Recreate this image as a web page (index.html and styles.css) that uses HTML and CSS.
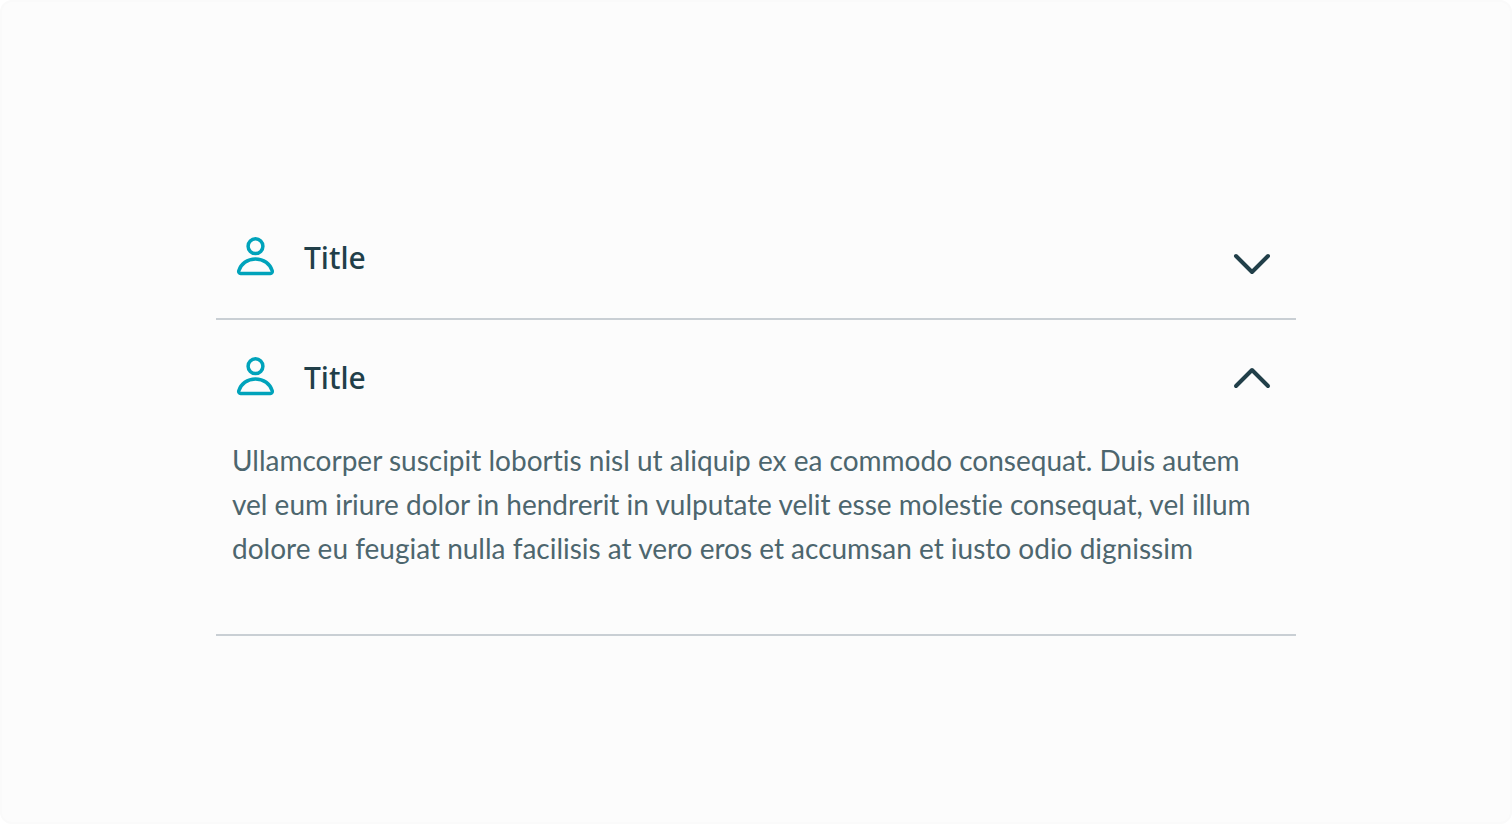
FILE: index.html
```html
<!DOCTYPE html>
<html lang="en">
<head>
  <meta charset="UTF-8">
  <meta name="viewport" content="width=device-width, initial-scale=1.0">
  <title>Accordion</title>
  <link rel="stylesheet" href="styles.css">
</head>
<body>
<main class="stage">
  <div class="accordion">
    <section class="item">
      <button class="item-header" type="button" aria-expanded="false">
        <svg class="icon user" viewBox="0 0 48 48" aria-hidden="true">
          <circle cx="23.5" cy="12.2" r="7.4"/>
          <path d="M8.6 39.4H38.4C39.8 39.4 40.6 38.2 40.2 36.8C38.2 29.8 31.6 24.9 23.5 24.9S8.8 29.8 6.8 36.8C6.4 38.2 7.2 39.4 8.6 39.4Z"/>
        </svg>
        <span class="title">Title</span>
        <svg class="icon chevron" viewBox="0 0 48 48" aria-hidden="true">
          <path d="M8 22L24 38L40 22"/>
        </svg>
      </button>
    </section>
    <section class="item">
      <button class="item-header" type="button" aria-expanded="true" aria-controls="panel">
        <svg class="icon user" viewBox="0 0 48 48" aria-hidden="true">
          <circle cx="23.5" cy="12.2" r="7.4"/>
          <path d="M8.6 39.4H38.4C39.8 39.4 40.6 38.2 40.2 36.8C38.2 29.8 31.6 24.9 23.5 24.9S8.8 29.8 6.8 36.8C6.4 38.2 7.2 39.4 8.6 39.4Z"/>
        </svg>
        <span class="title">Title</span>
        <svg class="icon chevron" viewBox="0 0 48 48" aria-hidden="true">
          <path d="M8 32L24 16L40 32"/>
        </svg>
      </button>
      <div class="panel" id="panel">
        <p>Ullamcorper suscipit lobortis nisl ut aliquip ex ea commodo consequat. Duis autem vel eum iriure dolor in hendrerit in vulputate velit esse molestie consequat, vel illum dolore eu feugiat nulla facilisis at vero eros et accumsan et iusto odio dignissim</p>
      </div>
    </section>
  </div>
</main>
</body>
</html>
```
FILE: styles.css
```css
* {
  box-sizing: border-box;
}
body {
  margin: 0;
  background-color: #fff;
  color: #213f49;
  font-family: "Noto Sans", sans-serif;
}
.stage {
  display: flex;
  justify-content: center;
  align-items: center;
  min-height: 100vh;
  border: 2px solid #fafafa;
  border-radius: 12px;
  background-color: #fcfcfc;
}
.accordion {
  width: 100%;
  max-width: 1080px;
  padding-top: 12px;
}
.item {
  border-bottom: 2px solid #c9cfd4;
}
.item-header {
  display: flex;
  align-items: center;
  gap: 24px;
  width: 100%;
  height: 118px;
  padding: 0 20px 2px 16px;
  border: none;
  background: none;
  color: inherit;
  font: inherit;
  text-align: left;
  cursor: pointer;
}
.title {
  flex: 1;
  font-size: 30px;
  font-weight: 500;
  line-height: 40px;
}
.icon {
  flex: none;
  width: 48px;
  height: 48px;
  fill: none;
  stroke-linecap: round;
  stroke-linejoin: round;
}
.user {
  stroke: #00a3bb;
  stroke-width: 3.5;
}
.chevron {
  stroke: #213f49;
  stroke-width: 4;
}
.panel {
  padding: 0 16px 64px;
}
.panel p {
  margin: 0;
  color: #4d666e;
  font-family: Lato, sans-serif;
  font-size: 28px;
  font-variant-ligatures: none;
  line-height: 44px;
}
```
